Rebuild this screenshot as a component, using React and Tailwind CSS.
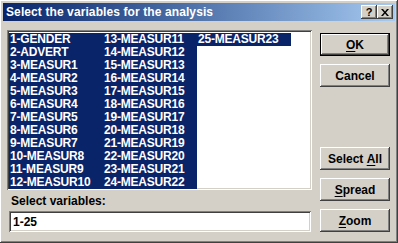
import React from 'react';

const vars = [
  '1-GENDER', '2-ADVERT', '3-MEASUR1', '4-MEASUR2', '5-MEASUR3', '6-MEASUR4',
  '7-MEASUR5', '8-MEASUR6', '9-MEASUR7', '10-MEASUR8', '11-MEASUR9', '12-MEASUR10',
  '13-MEASUR11', '14-MEASUR12', '15-MEASUR13', '16-MEASUR14', '17-MEASUR15', '18-MEASUR16',
  '19-MEASUR17', '20-MEASUR18', '21-MEASUR19', '22-MEASUR20', '23-MEASUR21', '24-MEASUR22',
  '25-MEASUR23',
];

const raised =
  'shadow-[inset_-1px_-1px_#404040,inset_1px_1px_#ffffff,inset_-2px_-2px_#808080,inset_2px_2px_#d4d0c8]';
const sunken =
  'shadow-[inset_1px_1px_#808080,inset_-1px_-1px_#ffffff,inset_2px_2px_#404040,inset_-2px_-2px_#d4d0c8]';

function Btn({ children, def, className = '' }) {
  return (
    <div className={`w-[70px] h-[23px] ${def ? 'border border-black' : ''} ${className}`}>
      <div className={`w-full h-full bg-[#d4d0c8] ${raised} flex items-center justify-center text-[12px] font-bold text-black`}>
        {children}
      </div>
    </div>
  );
}

export default function App() {
  return (
    <div
      className={`w-[398px] h-[243px] bg-[#d4d0c8] p-[3px] ${raised} flex flex-col`}
      style={{ fontFamily: '"Liberation Sans", Arial, sans-serif' }}
    >
      {/* title bar */}
      <div className="h-[18px] bg-gradient-to-r from-[#0a246a] to-[#a6caf0] flex items-center justify-between pl-[3px] pr-[2px]">
        <span className="text-white text-[12px] font-bold leading-none tracking-[0.1px]">
          Select the variables for the analysis
        </span>
        <div className="flex">
          <div className={`w-[16px] h-[14px] bg-[#d4d0c8] ${raised} flex items-center justify-center text-[11px] font-bold leading-none`}>?</div>
          <div className={`w-[16px] h-[14px] bg-[#d4d0c8] ${raised} flex items-center justify-center`}>
            <svg width="8" height="7" viewBox="0 0 8 7">
              <path d="M0 0h2l2 2.5L6 0h2L5 3.5 8 7H6L4 4.5 2 7H0l3-3.5z" fill="#000" />
            </svg>
          </div>
        </div>
      </div>

      <div className="flex flex-1 pl-[4px] pt-[9px]">
        {/* left side */}
        <div className="flex flex-col w-[305px]">
          <div className={`w-[305px] h-[160px] bg-white ${sunken} p-[2px]`}>
            <div className="grid grid-flow-col grid-rows-[repeat(12,13px)] auto-cols-[94px] pt-[1px]">
              {vars.map((v) => (
                <div
                  key={v}
                  className="bg-[#0a246a] text-white text-[12px] font-bold leading-[13px] pl-[1px] whitespace-nowrap tracking-[-0.2px]"
                >
                  {v}
                </div>
              ))}
            </div>
          </div>
          <div className="text-[12px] font-bold text-black pl-[4px] mt-[4px] leading-[14px]">Select variables:</div>
          <div className={`ml-[2px] mt-[3px] w-[302px] h-[21px] bg-white ${sunken} flex items-center pl-[4px] text-[12px] font-bold`}>
            1-25
          </div>
        </div>

        {/* right side */}
        <div className="flex flex-col ml-[8px] pt-[3px]">
          <Btn def>
            <span className="underline underline-offset-2">O</span>K
          </Btn>
          <Btn className="mt-[8px]">Cancel</Btn>
          <Btn className="mt-[60px]">
            Select&nbsp;<span className="underline underline-offset-2">A</span>ll
          </Btn>
          <Btn className="mt-[8px]">
            <span className="underline underline-offset-2">S</span>pread
          </Btn>
          <Btn className="mt-[8px]">
            <span className="underline underline-offset-2">Z</span>oom
          </Btn>
        </div>
      </div>
    </div>
  );
}
